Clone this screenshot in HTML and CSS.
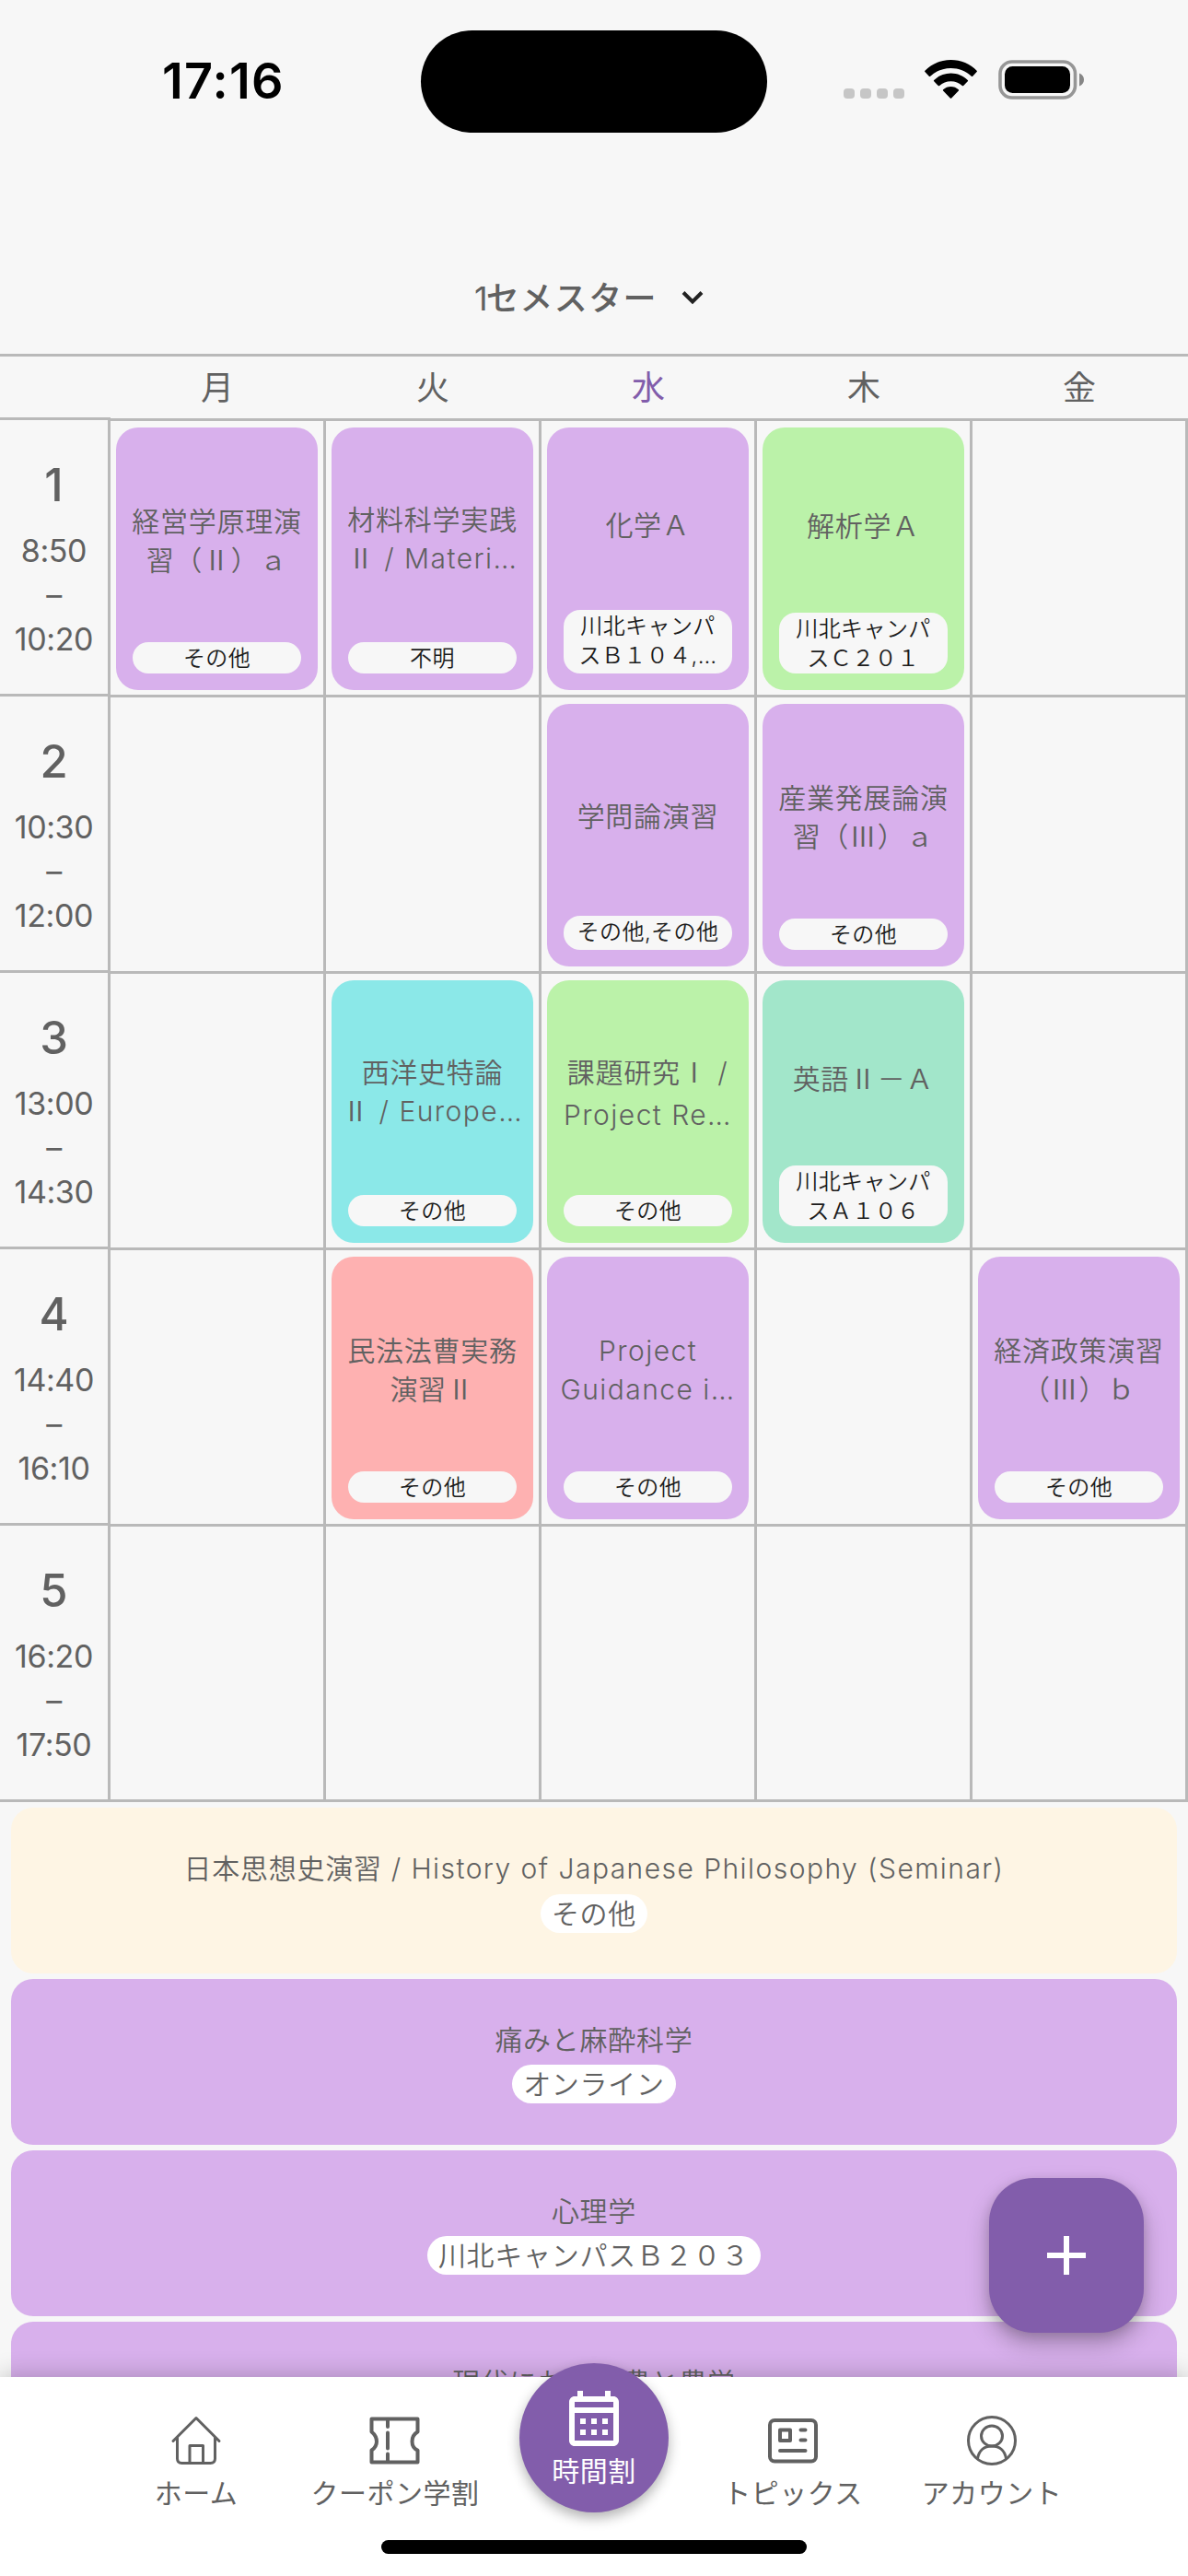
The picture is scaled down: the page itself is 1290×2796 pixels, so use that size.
FILE: index.html
```html
<!DOCTYPE html>
<html lang="ja">
<head>
<meta charset="utf-8">
<title>時間割</title>
<link rel="stylesheet" href="styles.css">
</head>
<body>
<div class="app">
  <header class="status">
    <span class="clock">17:16</span>
    <span class="island"></span>
    <span class="indicators">
      <span class="dots"><i></i><i></i><i></i><i></i></span>
      <svg class="wifi" viewBox="0 0 57 42"><path d="M28.500 0C39.500 0 49.500 4.200 56.600 11.800Q57.200 12.500 56.600 13.100L52.200 17.700Q51.500 18.300 50.800 17.700C44.900 12.100 37 8.900 28.500 8.900S12.100 12.100 6.200 17.700Q5.500 18.300 4.800 17.700L.4 13.100Q-.2 12.500.4 11.800C7.500 4.200 17.500 0 28.500 0Z"/><path d="M28.500 14.600C35.500 14.600 41.800 17.300 46.800 22Q47.400 22.700 46.800 23.300L42.200 28Q41.500 28.600 40.800 28C37.500 25 33.200 23.200 28.500 23.200S19.500 25 16.200 28Q15.500 28.600 14.800 28L10.200 23.300Q9.600 22.700 10.200 22C15.200 17.300 21.500 14.600 28.500 14.600Z"/><path d="M28.500 28.900C31.700 28.900 34.600 30.100 36.900 32.200Q37.500 32.900 36.900 33.500L29.200 41.400Q28.500 42 27.800 41.400L20.100 33.500Q19.500 32.900 20.100 32.200C22.400 30.100 25.300 28.900 28.500 28.900Z"/></svg>
      <svg class="battery" viewBox="0 0 93 43"><rect x="2" y="2" width="81.500" height="39" rx="13" fill="none" stroke="#969696" stroke-width="3.600"/><rect x="7" y="7" width="71" height="29" rx="8.500"/><path d="M88 14.500C91.500 16 93 18.500 93 21.500S91.500 27 88 28.500Z" fill="#868686"/></svg>
    </span>
  </header>

  <div class="semester"><span><b>1</b>セメスター</span>
    <svg viewBox="0 0 26 18"><path d="M3 3.500 13 13.500 23 3.500"/></svg>
  </div>

  <div class="days"><span></span><span>月</span><span>火</span><span class="today">水</span><span>木</span><span>金</span></div>

  <main class="table">
    <div class="periods">
      <div class="period"><strong>1</strong><span>8:50</span><span>–</span><span>10:20</span></div>
      <div class="period"><strong>2</strong><span>10:30</span><span>–</span><span>12:00</span></div>
      <div class="period"><strong>3</strong><span>13:00</span><span>–</span><span>14:30</span></div>
      <div class="period"><strong>4</strong><span>14:40</span><span>–</span><span>16:10</span></div>
      <div class="period"><strong>5</strong><span>16:20</span><span>–</span><span>17:50</span></div>
    </div>
    <div class="cells">
      <div class="cell"><article class="card"><h3><span>経営学原理演</span><span>習（Ⅱ）ａ</span></h3><p>その他</p></article></div>
      <div class="cell"><article class="card"><h3 class="mixed"><span>材料科学実践</span><span>Ⅱ<em> / Materi…</em></span></h3><p>不明</p></article></div>
      <div class="cell"><article class="card"><h3><span>化学Ａ</span></h3><p class="tall">川北キャンパ<br>スＢ１０４,…</p></article></div>
      <div class="cell"><article class="card lime"><h3><span>解析学Ａ</span></h3><p>川北キャンパ<br>スＣ２０１</p></article></div>
      <div class="cell"></div>

      <div class="cell"></div>
      <div class="cell"></div>
      <div class="cell"><article class="card"><h3><span>学問論演習</span></h3><p class="tall">その他,その他</p></article></div>
      <div class="cell"><article class="card"><h3><span>産業発展論演</span><span>習（Ⅲ）ａ</span></h3><p>その他</p></article></div>
      <div class="cell"></div>

      <div class="cell"></div>
      <div class="cell"><article class="card cyan"><h3 class="mixed"><span>西洋史特論</span><span>Ⅱ<em> / Europe…</em></span></h3><p>その他</p></article></div>
      <div class="cell"><article class="card lime"><h3 class="loose"><span>課題研究Ⅰ<em> /</em></span><span><em>Project Re…</em></span></h3><p>その他</p></article></div>
      <div class="cell"><article class="card mint"><h3><span>英語Ⅱ－Ａ</span></h3><p>川北キャンパ<br>スＡ１０６</p></article></div>
      <div class="cell"></div>

      <div class="cell"></div>
      <div class="cell"><article class="card coral"><h3><span>民法法曹実務</span><span>演習Ⅱ</span></h3><p>その他</p></article></div>
      <div class="cell"><article class="card"><h3><span><em>Project</em></span><span><em>Guidance i…</em></span></h3><p>その他</p></article></div>
      <div class="cell"></div>
      <div class="cell"><article class="card"><h3><span>経済政策演習</span><span>（Ⅲ）ｂ</span></h3><p>その他</p></article></div>

      <div class="cell"></div><div class="cell"></div><div class="cell"></div><div class="cell"></div><div class="cell"></div>
    </div>
  </main>

  <section class="list">
    <article class="row cream"><h3>日本思想史演習<em> / History of Japanese Philosophy (Seminar)</em></h3><p>その他</p></article>
    <article class="row"><h3>痛みと麻酔科学</h3><p>オンライン</p></article>
    <article class="row"><h3>心理学</h3><p>川北キャンパスＢ２０３</p></article>
    <article class="row partial"><h3>現代における農と農学</h3></article>
  </section>

  <button class="fab" aria-label="追加"><svg viewBox="0 0 42 42"><path d="M21 0V42M0 21H42"/></svg></button>

  <nav class="tabs">
    <a class="tab"><svg class="line" viewBox="0 0 72 72"><path d="M11 36.500 36 11.500 61 36.500M15.500 33V55.500Q15.500 60.500 20.500 60.500H51.500Q56.500 60.500 56.500 55.500V33M29 60V41.500H43.500V60"/></svg><span>ホーム</span></a>
    <a class="tab"><svg class="line thick" viewBox="0 0 72 72"><path d="M10.500 12.500H60.500V26.500Q54.500 30 54.500 37T60.500 46.500V59.500H10.500V46.500Q16 43 16 37T10.500 26.500Z"/><path d="M28 13.500V21M28 27.500V44.500M28 50.500V59"/></svg><span>クーポン学割</span></a>
    <a class="tab active"><svg viewBox="0 0 24 24"><path fill="#fff" d="M19 4h-1V2h-2v2H8V2H6v2H5c-1.110 0-1.990.9-1.990 2L3 20c0 1.100.89 2 2 2h14c1.100 0 2-.9 2-2V6c0-1.100-.9-2-2-2zm0 16H5V10h14v10zm0-12H5V6h14v2zM9 14H7v-2h2v2zm4 0h-2v-2h2v2zm4 0h-2v-2h2v2zm-8 4H7v-2h2v2zm4 0h-2v-2h2v2zm4 0h-2v-2h2v2z"/></svg><span>時間割</span></a>
    <a class="tab"><svg class="line thick" viewBox="0 0 72 72"><rect x="11" y="14" width="50" height="44.500" rx="5"/><rect x="22" y="24.500" width="11" height="11.500"/><path d="M44.500 24.500H49.500M44.500 35.500H49.500M22 47H49.500"/></svg><span>トピックス</span></a>
    <a class="tab"><svg class="line" viewBox="0 0 72 72"><circle cx="36" cy="36" r="25.500"/><ellipse cx="36" cy="31" rx="11.500" ry="11"/><path d="M20.500 55.500C22 46.500 28 42 36 42S50 46.500 51.500 55.500"/></svg><span>アカウント</span></a>
    <i class="home-bar"></i>
  </nav>
</div>
</body>
</html>
```
FILE: styles.css
```css
* { box-sizing: border-box; }

body {
  margin: 0;
  background: #f7f7f7;
  color: #616161;
  font-family: Inter, "Noto Sans CJK JP", sans-serif;
  text-spacing-trim: space-all;
}

h3, p { margin: 0; font-weight: 350; }
em { font-family: Inter, sans-serif; font-style: normal; font-weight: 300; letter-spacing: 1.45px; }

.app {
  position: relative;
  display: flex;
  flex-direction: column;
  width: 1290px;
  height: 2796px;
  overflow: hidden;
}

/* status bar */
.status {
  flex: none;
  display: grid;
  grid-template-columns: 457px 376px 1fr;
  height: 177px;
  color: #000;
}
.clock {
  padding: 55px 0 0 176px;
  font-size: 54px;
  line-height: 66px;
  font-weight: 600;
  letter-spacing: 1.2px;
}
.island { height: 111px; margin-top: 33px; border-radius: 56px; background: #000; }
.indicators { display: flex; padding: 65px 0 0 83px; }
.dots { display: flex; gap: 6px; width: 88px; padding-top: 31px; }
.dots i { width: 12px; height: 11px; border-radius: 4px; background: #c6c6c6; }
.wifi { width: 57px; height: 42px; margin-right: 23px; overflow: visible; }
.battery { width: 93px; height: 43px; }

.semester {
  flex: none;
  display: flex;
  align-items: center;
  justify-content: center;
  gap: 25px;
  height: 207px;
  padding: 84px 10px 0 0;
  font-size: 36px;
  letter-spacing: 1.4px;
  font-weight: 500;
}
.semester span { margin-top: -4px; }
.semester b { font-weight: 400; letter-spacing: -2px; }
.semester svg { width: 26px; height: 18px; fill: none; stroke: #222; stroke-width: 4; }

.days {
  flex: none;
  display: grid;
  grid-template-columns: 119px repeat(5, 234px);
  height: 69px;
  border-top: 3px solid #b9b9b9;
  font-size: 36px;
  line-height: 68px;
  text-align: center;
}
.today { color: #825dab; }

/* timetable */
.table {
  flex: none;
  display: flex;
  height: 1503px;
  border-bottom: 3px solid #b9b9b9;
}
.periods { width: 120px; border-right: 3px solid #b9b9b9; }
.period {
  display: flex;
  flex-direction: column;
  height: 300px;
  padding-top: 41px;
  border-top: 3px solid #b9b9b9;
  font-size: 34px;
  line-height: 48px;
  text-align: center;
}
.period strong { margin-bottom: 17px; font-size: 49px; line-height: 60px; font-weight: 500; }
.period span { letter-spacing: -0.4px; }

.cells {
  display: grid;
  grid-template-columns: repeat(5, 234px);
  grid-template-rows: 301px repeat(3, 300px) 299px;
}
.cell { padding: 7px 6px 5px; border-top: 3px solid #b9b9b9; border-right: 3px solid #b9b9b9; }
.cells .cell:nth-child(-n+5) { margin-top: 1px; }
.card {
  display: flex;
  flex-direction: column;
  height: 285px;
  padding: 9px 0 18px;
  border-radius: 24px;
  background: #d8b0ec;
  text-align: center;
}
.lime { background: #bbf2a9; }
.cyan { background: #8be8e8; }
.mint { background: #a2e6ca; }
.coral { background: #feb1b1; }

.card h3 {
  flex: 1;
  display: flex;
  flex-direction: column;
  justify-content: center;
  font-family: "Noto Sans CJK JP", sans-serif;
  font-size: 30px;
  line-height: 42px;
  letter-spacing: 0.75px;
  white-space: nowrap;
}
.card h3 span { height: 42px; }
.card h3.mixed { padding-bottom: 4px; }
.card h3.loose { gap: 4px; }
.card p {
  margin: 0 18px;
  padding: 2px 6px 0;
  border-radius: 18px;
  background: #f7f7f7;
  color: #1c1c1c;
  font-size: 24px;
  line-height: 32px;
  letter-spacing: 0.4px;
  white-space: nowrap;
}
.card p.tall { padding-bottom: 3px; }

/* courses without a slot */
.list { display: flex; flex: 1; flex-direction: column; gap: 6px; min-height: 0; padding: 6px 12px 0; overflow: hidden; }
.row {
  flex: none;
  display: flex;
  flex-direction: column;
  align-items: center;
  justify-content: center;
  gap: 6px;
  height: 180px;
  border-radius: 24px;
  background: #d8b0ec;
  font-size: 30px;
  line-height: 42px;
  letter-spacing: 0.75px;
}
.cream { background: #fef5e4; }
.row h3 { font-size: 30px; }
.row p { padding: 0 12px; border-radius: 21px; background: #fff; }
.cream p { margin: 1px 0 -1px; }
.partial { justify-content: flex-start; padding-top: 45px; }

.fab {
  position: absolute;
  left: 1074px;
  top: 2364px;
  display: grid;
  place-items: center;
  width: 168px;
  height: 168px;
  border: 0;
  border-radius: 48px;
  background: #825dab;
  box-shadow: 0 12px 24px rgba(0, 0, 0, .26), 0 3px 12px rgba(0, 0, 0, .12);
}
.fab svg { width: 42px; height: 42px; stroke: #fff; stroke-width: 6; }

/* bottom navigation */
.tabs {
  position: relative;
  flex: none;
  display: grid;
  grid-template-columns: repeat(5, 216px);
  justify-content: center;
  height: 216px;
  background: #fff;
  box-shadow: 0 -3px 24px rgba(0, 0, 0, .2);
}
.tab {
  display: flex;
  flex-direction: column;
  align-items: center;
  padding-top: 33px;
  font-size: 30px;
  line-height: 42px;
  letter-spacing: 0.5px;
  white-space: nowrap;
}
.tab svg { width: 72px; height: 72px; }
.line { fill: none; stroke: #616161; stroke-width: 3; stroke-linecap: round; stroke-linejoin: round; }
.thick { stroke-width: 4; }
.active {
  justify-self: center;
  width: 162px;
  height: 162px;
  margin-top: -15px;
  padding-top: 24px;
  border-radius: 50%;
  background: #825dab;
  box-shadow: 0 6px 14px rgba(0, 0, 0, .3);
  color: #fff;
}
.home-bar {
  position: absolute;
  left: 414px;
  bottom: 24px;
  width: 462px;
  height: 15px;
  border-radius: 8px;
  background: #000;
}
```
